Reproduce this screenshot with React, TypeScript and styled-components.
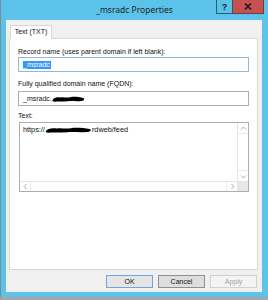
import React from "react";
import styled, { createGlobalStyle } from "styled-components";

const Global = createGlobalStyle`
  *, *::before, *::after { box-sizing: border-box; }
  html, body { margin: 0; padding: 0; background: #a4a7a9; }
  body {
    width: 268px;
    height: 300px;
    overflow: hidden;
    font-family: "Liberation Sans", Arial, sans-serif;
  }
`;

const Window = styled.div`
  width: 268px;
  height: 297px;
  background: #5bc3ea;
  border-left: 1px solid #7d8d95;
  display: flex;
  flex-direction: column;
`;

const TitleBar = styled.div`
  height: 20px;
  flex: none;
  display: grid;
  grid-template-columns: 1fr auto 1fr;
  align-items: start;
`;

const Title = styled.div`
  grid-column: 2;
  padding-top: 4px;
  font-family: "Noto Sans", "Open Sans", sans-serif;
  font-size: 8.5px;
  line-height: 12px;
  color: #1c1c1c;
  white-space: nowrap;
`;

const Caption = styled.div`
  grid-column: 3;
  justify-self: end;
  display: flex;
  margin-right: 4px;
`;

const CaptionButton = styled.div<{ $close?: boolean }>`
  width: ${(p) => (p.$close ? "31px" : "17px")};
  height: 14px;
  display: flex;
  align-items: center;
  justify-content: center;
  background: ${(p) => (p.$close ? "#c75050" : "#5bc3ea")};
  border: 1px solid ${(p) => (p.$close ? "#6e3b3b" : "#2f5b70")};
  border-top: none;
  ${(p) => (p.$close ? "border-left: none;" : "")}
  font-family: "Liberation Sans", Arial, sans-serif;
  font-weight: bold;
  font-size: 9px;
  color: #1d1d1d;
`;

const Frame = styled.div`
  flex: 1;
  display: flex;
  padding: 0 6px 5px 5px;
`;

const Client = styled.div`
  flex: 1;
  background: #f0f0f0;
  display: flex;
  flex-direction: column;
`;

const TabStrip = styled.div`
  display: flex;
  margin-top: 5px;
  padding-left: 4px;
  position: relative;
  z-index: 1;
  margin-bottom: -1px;
`;

const Tab = styled.div`
  width: 42px;
  height: 14px;
  background: #fff;
  border: 1px solid #d9d9d9;
  border-bottom: none;
  font-size: 7px;
  line-height: 12px;
  color: #111;
  text-align: center;
`;

const Panel = styled.div`
  height: 232px;
  margin: 0 4px 0 3px;
  background: #fff;
  border: 1px solid #d9d9d9;
  padding: 9px 8px 0 8px;
  display: flex;
  flex-direction: column;
`;

const Label = styled.div<{ $gap: number; $after: number }>`
  margin-top: ${(p) => p.$gap}px;
  margin-bottom: ${(p) => p.$after}px;
  height: 8px;
  font-size: 7px;
  line-height: 8px;
  color: #111;
  white-space: nowrap;
`;

const TextBox = styled.div<{ $focused?: boolean }>`
  height: 15px;
  border: 1px solid ${(p) => (p.$focused ? "#8fb8de" : "#abadb3")};
  background: #fff;
  padding-left: 4px;
  display: flex;
  align-items: center;
  font-size: 7px;
  color: #111;
  white-space: nowrap;
`;

const Selected = styled.span`
  background: #3399ff;
  color: #fff;
  line-height: 8px;
  padding-right: 1px;
`;

const MultiBox = styled.div`
  height: 70px;
  margin-left: 1px;
  border: 1px solid #abadb3;
  display: grid;
  grid-template-columns: 1fr 11px;
  grid-template-rows: 1fr 10px;
`;

const MultiText = styled.div`
  padding: 2px 3px;
  font-size: 7.3px;
  line-height: 9px;
  color: #111;
  white-space: nowrap;
  display: flex;
  align-items: center;
  align-self: start;
`;

const VScroll = styled.div`
  border-left: 1px solid #e6e6e6;
  display: flex;
  flex-direction: column;
  justify-content: space-between;
  background: #fff;
`;

const HScroll = styled.div`
  border-top: 1px solid #e6e6e6;
  display: flex;
  justify-content: space-between;
  background: #fff;
`;

const ArrowBox = styled.div<{ $side: "top" | "bottom" | "left" | "right" }>`
  width: ${(p) => (p.$side === "left" || p.$side === "right" ? "11px" : "100%")};
  height: ${(p) => (p.$side === "left" || p.$side === "right" ? "100%" : "11px")};
  display: flex;
  align-items: center;
  justify-content: center;
  ${(p) => `border-${p.$side === "top" ? "bottom" : p.$side === "bottom" ? "top" : p.$side === "left" ? "right" : "left"}: 1px solid #ececec;`}
`;

const Corner = styled.div`
  background: #e8e8e8;
  border-left: 1px solid #e6e6e6;
  border-top: 1px solid #e6e6e6;
`;

const ButtonRow = styled.div`
  display: flex;
  justify-content: flex-end;
  gap: 5px;
  margin-top: 5px;
  padding-right: 5px;
`;

const Button = styled.div<{ $variant: "default" | "normal" | "disabled" }>`
  width: 47px;
  height: 13px;
  display: flex;
  align-items: center;
  justify-content: center;
  font-size: 7px;
  color: ${(p) => (p.$variant === "disabled" ? "#a3a3a3" : "#111")};
  background: ${(p) =>
    p.$variant === "disabled" ? "#f4f4f4" : p.$variant === "default" ? "#e5e5e5" : "#dedede"};
  border: 1px solid
    ${(p) =>
      p.$variant === "default" ? "#6fa7dc" : p.$variant === "normal" ? "#8f8f8f" : "#d2d2d2"};
`;

const Blob = ({ w, h }: { w: number; h: number }) => (
  <svg width={w} height={h} viewBox="0 0 40 8" preserveAspectRatio="none" style={{ display: "block" }}>
    <path
      d="M1 5 C2 2 6 1 10 2 C14 1 18 3 22 1.5 C27 0.5 33 1.5 38 2.5 C40 4 39 6.5 35 6.5 C30 7.5 24 6 19 7 C13 7.5 7 7 3 7.5 C0.5 7.5 0 6 1 5 Z"
      fill="#000"
    />
  </svg>
);

const Chevron = ({ dir }: { dir: "up" | "down" | "left" | "right" }) => {
  const pts =
    dir === "up"
      ? "1,4.5 3.5,2 6,4.5"
      : dir === "down"
      ? "1,2.5 3.5,5 6,2.5"
      : dir === "left"
      ? "4.5,1 2,3.5 4.5,6"
      : "2.5,1 5,3.5 2.5,6";
  return (
    <svg width="7" height="7" viewBox="0 0 7 7">
      <polyline points={pts} fill="none" stroke="#a8a8a8" strokeWidth="1" />
    </svg>
  );
};

export default function App() {
  return (
    <>
      <Global />
      <Window>
        <TitleBar>
          <Title>_msradc Properties</Title>
          <Caption>
            <CaptionButton>?</CaptionButton>
            <CaptionButton $close>
              <svg width="8" height="7" viewBox="0 0 8 7">
                <path d="M1 0.5 L7 6.5 M7 0.5 L1 6.5" stroke="#2a1c1c" strokeWidth="1.7" />
              </svg>
            </CaptionButton>
          </Caption>
        </TitleBar>
        <Frame>
          <Client>
            <TabStrip>
              <Tab>Text (TXT)</Tab>
            </TabStrip>
            <Panel>
              <Label $gap={0} $after={1}>Record name (uses parent domain if left blank):</Label>
              <TextBox $focused>
                <Selected>_msradc</Selected>
              </TextBox>
              <Label $gap={8} $after={3}>Fully qualified domain name (FQDN):</Label>
              <TextBox>
                <span>_msradc.</span>
                <Blob w={33} h={6} />
              </TextBox>
              <Label $gap={6} $after={2}>Text:</Label>
              <MultiBox>
                <MultiText>
                  <span>https://</span>
                  <Blob w={47} h={6} />
                  <span>rdweb/feed</span>
                </MultiText>
                <VScroll>
                  <ArrowBox $side="top">
                    <Chevron dir="up" />
                  </ArrowBox>
                  <ArrowBox $side="bottom">
                    <Chevron dir="down" />
                  </ArrowBox>
                </VScroll>
                <HScroll>
                  <ArrowBox $side="left">
                    <Chevron dir="left" />
                  </ArrowBox>
                  <ArrowBox $side="right">
                    <Chevron dir="right" />
                  </ArrowBox>
                </HScroll>
                <Corner />
              </MultiBox>
            </Panel>
            <ButtonRow>
              <Button $variant="default">OK</Button>
              <Button $variant="normal">Cancel</Button>
              <Button $variant="disabled">Apply</Button>
            </ButtonRow>
          </Client>
        </Frame>
      </Window>
    </>
  );
}
